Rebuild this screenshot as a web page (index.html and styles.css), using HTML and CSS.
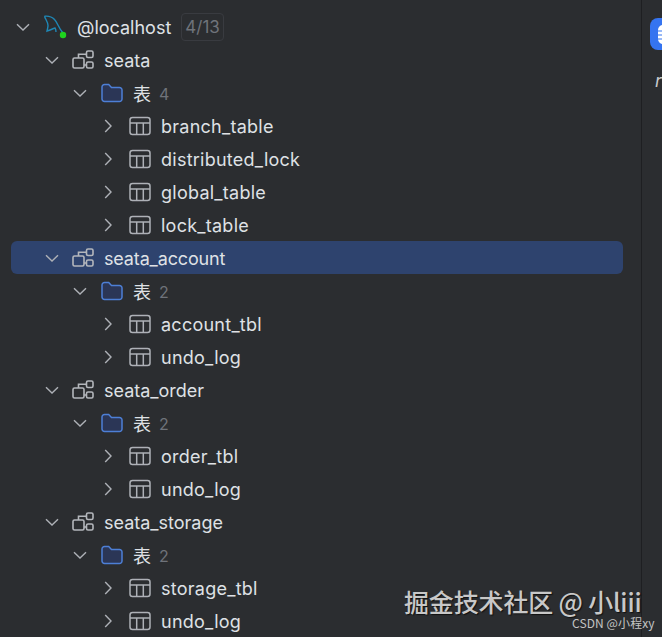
FILE: index.html
```html
<!DOCTYPE html>
<html lang="zh">
<head>
<meta charset="utf-8">
<title>Database Explorer</title>
<link rel="stylesheet" href="styles.css">
</head>
<body>
<svg class="defs" width="0" height="0" aria-hidden="true">
  <defs>
    <symbol id="down" viewBox="0 0 16 16"><path d="M2 5.200 8 11l6-5.800" fill="none" stroke="#aeb1b7" stroke-width="1.400"/></symbol>
    <symbol id="right" viewBox="0 0 16 16"><path d="M5.200 2 11 8l-5.800 6" fill="none" stroke="#aeb1b7" stroke-width="1.400"/></symbol>
    <symbol id="schema" viewBox="0 0 22 20"><g fill="none" stroke="#b4b7bc" stroke-width="1.600"><rect x="1" y="8" width="11" height="10" rx="1.500"/><rect x="14.500" y="1" width="6.500" height="6.500" rx="1.500"/><rect x="14.500" y="12" width="6.500" height="6" rx="1.500"/><path d="M6.500 8V4.300h8M12 15h2.500"/></g></symbol>
    <symbol id="folder" viewBox="0 0 22 20"><path d="M1 4a2.500 2.500 0 0 1 2.500-2.500h4.200L10.500 4.500h8A2.500 2.500 0 0 1 21 7v9a2.500 2.500 0 0 1-2.500 2.500h-15A2.500 2.500 0 0 1 1 16z" fill="#2b3656" stroke="#4d7fd6" stroke-width="1.500"/></symbol>
    <symbol id="table" viewBox="0 0 22 20"><g fill="none" stroke="#aeb1b7" stroke-width="1.500"><rect x="1" y="1.500" width="20" height="17" rx="2.500"/><path d="M1 7h20M7.700 7v11.500M14.300 7v11.500"/></g></symbol>
  </defs>
</svg>
<main class="window">
  <section class="tree">
    <div class="row lvl0">
      <svg class="chev"><use href="#down"/></svg>
      <svg class="icon dolphin" viewBox="0 0 24 24"><path d="M0.500 1.200C4 .8 8 1.800 10.500 4.500 13.500 7.500 14.500 13 19 18M0.500 1.200C1.500 4.500 4 7 4 10.500 4 12.500 3.300 14.500 3 16.200 5.500 15.500 9 13.500 11 13c.8 1.200 1 2.500 1 4" fill="none" stroke="#1f87b5" stroke-width="1.400"/><circle cx="19" cy="20" r="3.200" fill="#1fd31f"/></svg>
      <span class="name">@localhost</span><span class="badge">4/13</span>
    </div>
    <div class="row lvl1"><svg class="chev"><use href="#down"/></svg><svg class="icon"><use href="#schema"/></svg><span class="name">seata</span></div>
    <div class="row lvl2"><svg class="chev"><use href="#down"/></svg><svg class="icon"><use href="#folder"/></svg><span class="name">表</span><span class="count">4</span></div>
    <div class="row lvl3"><svg class="chev"><use href="#right"/></svg><svg class="icon"><use href="#table"/></svg><span class="name">branch_table</span></div>
    <div class="row lvl3"><svg class="chev"><use href="#right"/></svg><svg class="icon"><use href="#table"/></svg><span class="name">distributed_lock</span></div>
    <div class="row lvl3"><svg class="chev"><use href="#right"/></svg><svg class="icon"><use href="#table"/></svg><span class="name">global_table</span></div>
    <div class="row lvl3"><svg class="chev"><use href="#right"/></svg><svg class="icon"><use href="#table"/></svg><span class="name">lock_table</span></div>
    <div class="row lvl1 selected"><svg class="chev"><use href="#down"/></svg><svg class="icon"><use href="#schema"/></svg><span class="name">seata_account</span></div>
    <div class="row lvl2"><svg class="chev"><use href="#down"/></svg><svg class="icon"><use href="#folder"/></svg><span class="name">表</span><span class="count">2</span></div>
    <div class="row lvl3"><svg class="chev"><use href="#right"/></svg><svg class="icon"><use href="#table"/></svg><span class="name">account_tbl</span></div>
    <div class="row lvl3"><svg class="chev"><use href="#right"/></svg><svg class="icon"><use href="#table"/></svg><span class="name">undo_log</span></div>
    <div class="row lvl1"><svg class="chev"><use href="#down"/></svg><svg class="icon"><use href="#schema"/></svg><span class="name">seata_order</span></div>
    <div class="row lvl2"><svg class="chev"><use href="#down"/></svg><svg class="icon"><use href="#folder"/></svg><span class="name">表</span><span class="count">2</span></div>
    <div class="row lvl3"><svg class="chev"><use href="#right"/></svg><svg class="icon"><use href="#table"/></svg><span class="name">order_tbl</span></div>
    <div class="row lvl3"><svg class="chev"><use href="#right"/></svg><svg class="icon"><use href="#table"/></svg><span class="name">undo_log</span></div>
    <div class="row lvl1"><svg class="chev"><use href="#down"/></svg><svg class="icon"><use href="#schema"/></svg><span class="name">seata_storage</span></div>
    <div class="row lvl2"><svg class="chev"><use href="#down"/></svg><svg class="icon"><use href="#folder"/></svg><span class="name">表</span><span class="count">2</span></div>
    <div class="row lvl3"><svg class="chev"><use href="#right"/></svg><svg class="icon"><use href="#table"/></svg><span class="name">storage_tbl</span></div>
    <div class="row lvl3"><svg class="chev"><use href="#right"/></svg><svg class="icon"><use href="#table"/></svg><span class="name">undo_log</span></div>
  </section>
  <aside class="side">
    <div class="side-btn"><svg class="db" viewBox="0 0 12 24"><rect x="0" y="3" width="20" height="19" rx="5" fill="#fff"/><path d="M0 9h20M0 13h20M0 17h20M5 3v19" stroke="#3574f0" stroke-width="1.200"/></svg></div>
    <span class="side-text">r</span>
  </aside>
</main>
<div class="mark">
  <span class="mark-main">掘金技术社区 @ 小liii</span>
  <span class="mark-sub">CSDN @小程xy</span>
</div>
</body>
</html>
```

FILE: styles.css
```css
html, body {
  margin: 0;
  padding: 0;
  height: 100%;
  overflow: hidden;
  background: #2b2d30;
}
.defs { position: absolute; }
.window {
  display: flex;
  height: 637px;
  font-family: Inter, "Noto Sans CJK SC", sans-serif;
  color: #dfe1e5;
}
.tree {
  width: 612px;
  margin-left: 11px;
  padding-top: 10px;
  margin-right: 18px;
  flex: none;
}
.row {
  display: flex;
  align-items: center;
  height: 33px;
  box-sizing: border-box;
  font-size: 18px;
  white-space: nowrap;
}
.name { padding-top: 2px; }
.lvl0 { padding-left: 4px; }
.lvl1 { padding-left: 33px; }
.lvl2 { padding-left: 61px; }
.lvl2 .name { padding-top: 0; }
.lvl3 { padding-left: 89px; }
.lvl3 .name { letter-spacing: 0.25px; }
.selected {
  background: #2e436e;
  border-radius: 6px;
}
.selected .name { letter-spacing: -0.15px; }
.chev {
  width: 16px;
  height: 16px;
  margin-right: 12px;
  flex: none;
}
.lvl2 .chev, .lvl3 .chev { margin-right: 13px; }
.icon {
  width: 22px;
  height: 20px;
  margin-right: 10px;
  flex: none;
}
.dolphin {
  width: 24px;
  height: 24px;
  margin-right: 9px;
  margin-left: 1px;
  margin-top: 1px;
}
.badge {
  margin-left: 10px;
  padding: 0 3px;
  height: 26px;
  line-height: 26px;
  font-size: 17px;
  color: #6f737a;
  border: 1px solid #393b40;
  border-radius: 4px;
}
.count {
  margin-left: 8px;
  padding-top: 2px;
  font-size: 16px;
  color: #6f737a;
}
.side {
  flex: 1;
  border-left: 1px solid #1e1f22;
  padding-top: 18px;
  overflow: hidden;
}
.side-btn {
  width: 32px;
  height: 32px;
  margin-left: 8px;
  background: #3574f0;
  border-radius: 8px;
  display: flex;
  align-items: center;
  padding-left: 8px;
  box-sizing: border-box;
}
.db { width: 12px; height: 24px; }
.side-text {
  display: block;
  margin: 20px 0 0 13px;
  font-size: 18px;
  font-style: italic;
  color: #c8cacd;
}
.mark {
  position: absolute;
  left: 404px;
  top: 585px;
  width: 258px;
  height: 52px;
  font-family: "Noto Sans CJK SC", sans-serif;
}
.mark-main {
  position: absolute;
  left: 0;
  top: 2px;
  font-size: 25px;
  font-weight: 500;
  letter-spacing: -0.15px;
  line-height: 28px;
  color: #c8c8c8;
  text-shadow: 1px 1px 1px #111;
  white-space: nowrap;
}
.mark-sub {
  position: absolute;
  left: 168px;
  top: 30px;
  font-size: 12px;
  line-height: 16px;
  letter-spacing: 0.1px;
  color: #c4c4c4;
  white-space: nowrap;
}
```
